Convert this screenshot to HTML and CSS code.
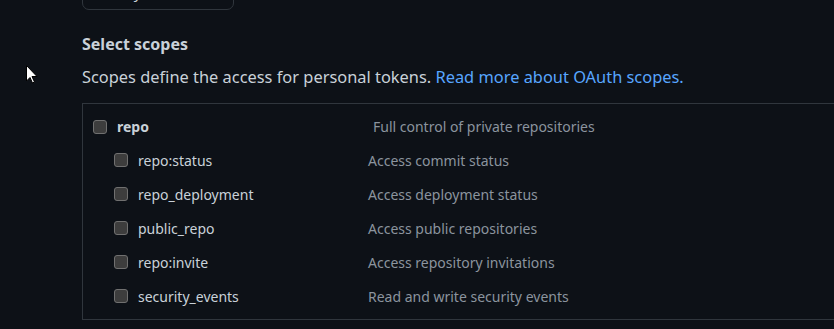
FILE: index.html
```html
<!DOCTYPE html>
<html lang="en">
<head>
    <meta charset="UTF-8">
    <title>Select scopes</title>
    <link rel="stylesheet" href="styles.css">
</head>
<body>
    <div class="page">
        <div class="expiration">
            <button class="select-btn" type="button">30 days</button>
        </div>

        <h2 class="scopes-title">Select scopes</h2>
        <p class="scopes-note">Scopes define the access for personal tokens. <a href="#">Read more about OAuth scopes.</a></p>

        <div class="scopes-box">
            <label class="scope parent">
                <span class="scope-name"><input type="checkbox"> <b>repo</b></span>
                <span class="scope-desc">Full control of private repositories</span>
            </label>
            <div class="children">
                <label class="scope">
                    <span class="scope-name"><input type="checkbox"> repo:status</span>
                    <span class="scope-desc">Access commit status</span>
                </label>
                <label class="scope">
                    <span class="scope-name"><input type="checkbox"> repo_deployment</span>
                    <span class="scope-desc">Access deployment status</span>
                </label>
                <label class="scope">
                    <span class="scope-name"><input type="checkbox"> public_repo</span>
                    <span class="scope-desc">Access public repositories</span>
                </label>
                <label class="scope">
                    <span class="scope-name"><input type="checkbox"> repo:invite</span>
                    <span class="scope-desc">Access repository invitations</span>
                </label>
                <label class="scope">
                    <span class="scope-name"><input type="checkbox"> security_events</span>
                    <span class="scope-desc">Read and write security events</span>
                </label>
            </div>
        </div>
    </div>

    <!-- mouse pointer captured in the screenshot -->
    <svg class="cursor" width="12" height="19" viewBox="0 0 12 19">
        <path d="M0.5 0.5 L0.5 16 L4 12.5 L6.5 18 L8.5 17 L6 11.5 L11 11.5 Z" fill="#fff" stroke="#000" stroke-width="1"/>
    </svg>
</body>
</html>
```

FILE: styles.css
```css
body { margin: 0; background-color: #0d1117; color: #c9d1d9; font-family: 'Noto Sans', 'Liberation Sans', sans-serif; overflow: hidden; position: relative; height: 329px; }
.page { padding-left: 82px; }

.expiration { margin-top: -26px; }
.select-btn { width: 152px; height: 36px; padding: 0 12px; text-align: left; background: #0d1117; color: #c9d1d9; border: 1px solid #30363d; border-radius: 7px; font-family: inherit; font-size: 15px; }

.scopes-title { margin: 22px 0 0; font-size: 16px; line-height: 24px; font-weight: 700; color: #c9d1d9; }
.scopes-note { margin: 9px 0 0; font-size: 16.4px; line-height: 24px; color: #c9d1d9; }
.scopes-note a { color: #58a6ff; text-decoration: none; }

.scopes-box { margin-top: 14px; width: 800px; padding: 6px 0; border: 1px solid #30363d; border-right: none; font-size: 14px; }
.scope { display: grid; grid-template-columns: 254px 1fr; align-items: center; height: 34px; }
.scope.parent { grid-template-columns: 280px 1fr; height: 33px; padding-left: 10px; }
.children { padding-left: 31px; }

.scope-name { display: flex; align-items: center; gap: 10px; color: #c9d1d9; }
.scope-name b { font-weight: 700; }
.scope-desc { color: #8b949e; }

input[type="checkbox"] { appearance: none; margin: 0; width: 14px; height: 14px; background: #3d3d3d; border: 1px solid #707070; border-radius: 3px; }

.cursor { position: absolute; left: 26px; top: 65px; }
```
